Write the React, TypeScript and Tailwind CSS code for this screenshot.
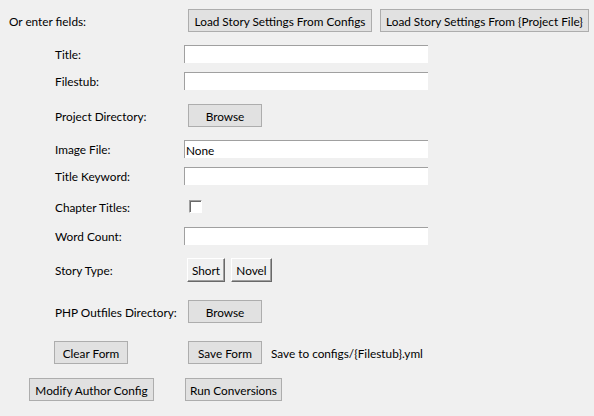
const font = { fontFamily: '"Segoe UI", Lato, "Noto Sans", sans-serif' };

const TtkButton = ({ label, w }: { label: string; w: string }) => (
  <div
    className={`h-[23px] ${w} shrink-0 flex items-center justify-center pt-[2px] bg-[#e1e1e1] border border-[#adadad] text-black whitespace-nowrap`}
  >
    {label}
  </div>
);

const TkButton = ({ label, w }: { label: string; w: string }) => (
  <div
    className={`h-[24px] ${w} flex items-center justify-center pt-[2px] bg-[#f0f0f0] border border-t-white border-l-white border-r-[#696969] border-b-[#696969] shadow-[inset_-1px_-1px_0_#a0a0a0] text-black`}
  >
    {label}
  </div>
);

const Entry = ({ value = "" }: { value?: string }) => (
  <div className="h-[18px] w-[244px] bg-white border-t border-l border-[#a0a0a0] pl-[1px] pt-[2px] flex items-center leading-none">
    {value}
  </div>
);

const Label = ({ text }: { text: string }) => (
  <div className="w-[129px] pl-[55px] pt-[2px] shrink-0 box-content whitespace-nowrap">{text}</div>
);

export default function App() {
  return (
    <div
      className="w-[594px] h-[416px] bg-[#f0f0f0] text-[11.8px] text-black overflow-hidden flex flex-col"
      style={font}
    >
      {/* top row */}
      <div className="mt-[9px] h-[23px] flex items-center">
        <div className="w-[179px] pl-[9px] pt-[2px] shrink-0 box-content">Or enter fields:</div>
        <TtkButton label="Load Story Settings From Configs" w="w-[184px]" />
        <div className="w-[8px] shrink-0" />
        <TtkButton label="Load Story Settings From {Project File}" w="w-[209px]" />
      </div>

      <div className="mt-[13px] h-[18px] flex items-center">
        <Label text="Title:" />
        <Entry />
      </div>
      <div className="mt-[9px] h-[18px] flex items-center">
        <Label text="Filestub:" />
        <Entry />
      </div>
      <div className="mt-[14px] h-[23px] flex items-center">
        <Label text="Project Directory:" />
        <div className="ml-[4px]">
          <TtkButton label="Browse" w="w-[74px]" />
        </div>
      </div>
      <div className="mt-[13px] h-[18px] flex items-center">
        <Label text="Image File:" />
        <Entry value="None" />
      </div>
      <div className="mt-[9px] h-[18px] flex items-center">
        <Label text="Title Keyword:" />
        <Entry />
      </div>
      <div className="mt-[15px] h-[13px] flex items-center">
        <Label text="Chapter Titles:" />
        <div className="ml-[5px] w-[13px] h-[13px] bg-white border border-t-[#a0a0a0] border-l-[#a0a0a0] border-r-white border-b-white">
          <div className="w-full h-full border-t border-l border-[#696969]" />
        </div>
      </div>
      <div className="mt-[14px] h-[18px] flex items-center">
        <Label text="Word Count:" />
        <Entry />
      </div>
      <div className="mt-[13px] h-[24px] flex items-center">
        <Label text="Story Type:" />
        <div className="ml-[3px] flex gap-[6px]">
          <TkButton label="Short" w="w-[38px]" />
          <TkButton label="Novel" w="w-[41px]" />
        </div>
      </div>
      <div className="mt-[18px] h-[23px] flex items-center">
        <Label text="PHP Outfiles Directory:" />
        <div className="ml-[4px]">
          <TtkButton label="Browse" w="w-[74px]" />
        </div>
      </div>
      <div className="mt-[18px] h-[23px] flex items-center">
        <div className="w-[134px] pl-[54px] shrink-0 box-content">
          <TtkButton label="Clear Form" w="w-[74px]" />
        </div>
        <TtkButton label="Save Form" w="w-[74px]" />
        <div className="ml-[9px] pt-[2px] whitespace-nowrap">Save to configs/{"{Filestub}"}.yml</div>
      </div>
      <div className="mt-[14px] h-[23px] flex items-center">
        <div className="w-[156px] pl-[29px] shrink-0 box-content">
          <TtkButton label="Modify Author Config" w="w-[125px]" />
        </div>
        <TtkButton label="Run Conversions" w="w-[97px]" />
      </div>
    </div>
  );
}
